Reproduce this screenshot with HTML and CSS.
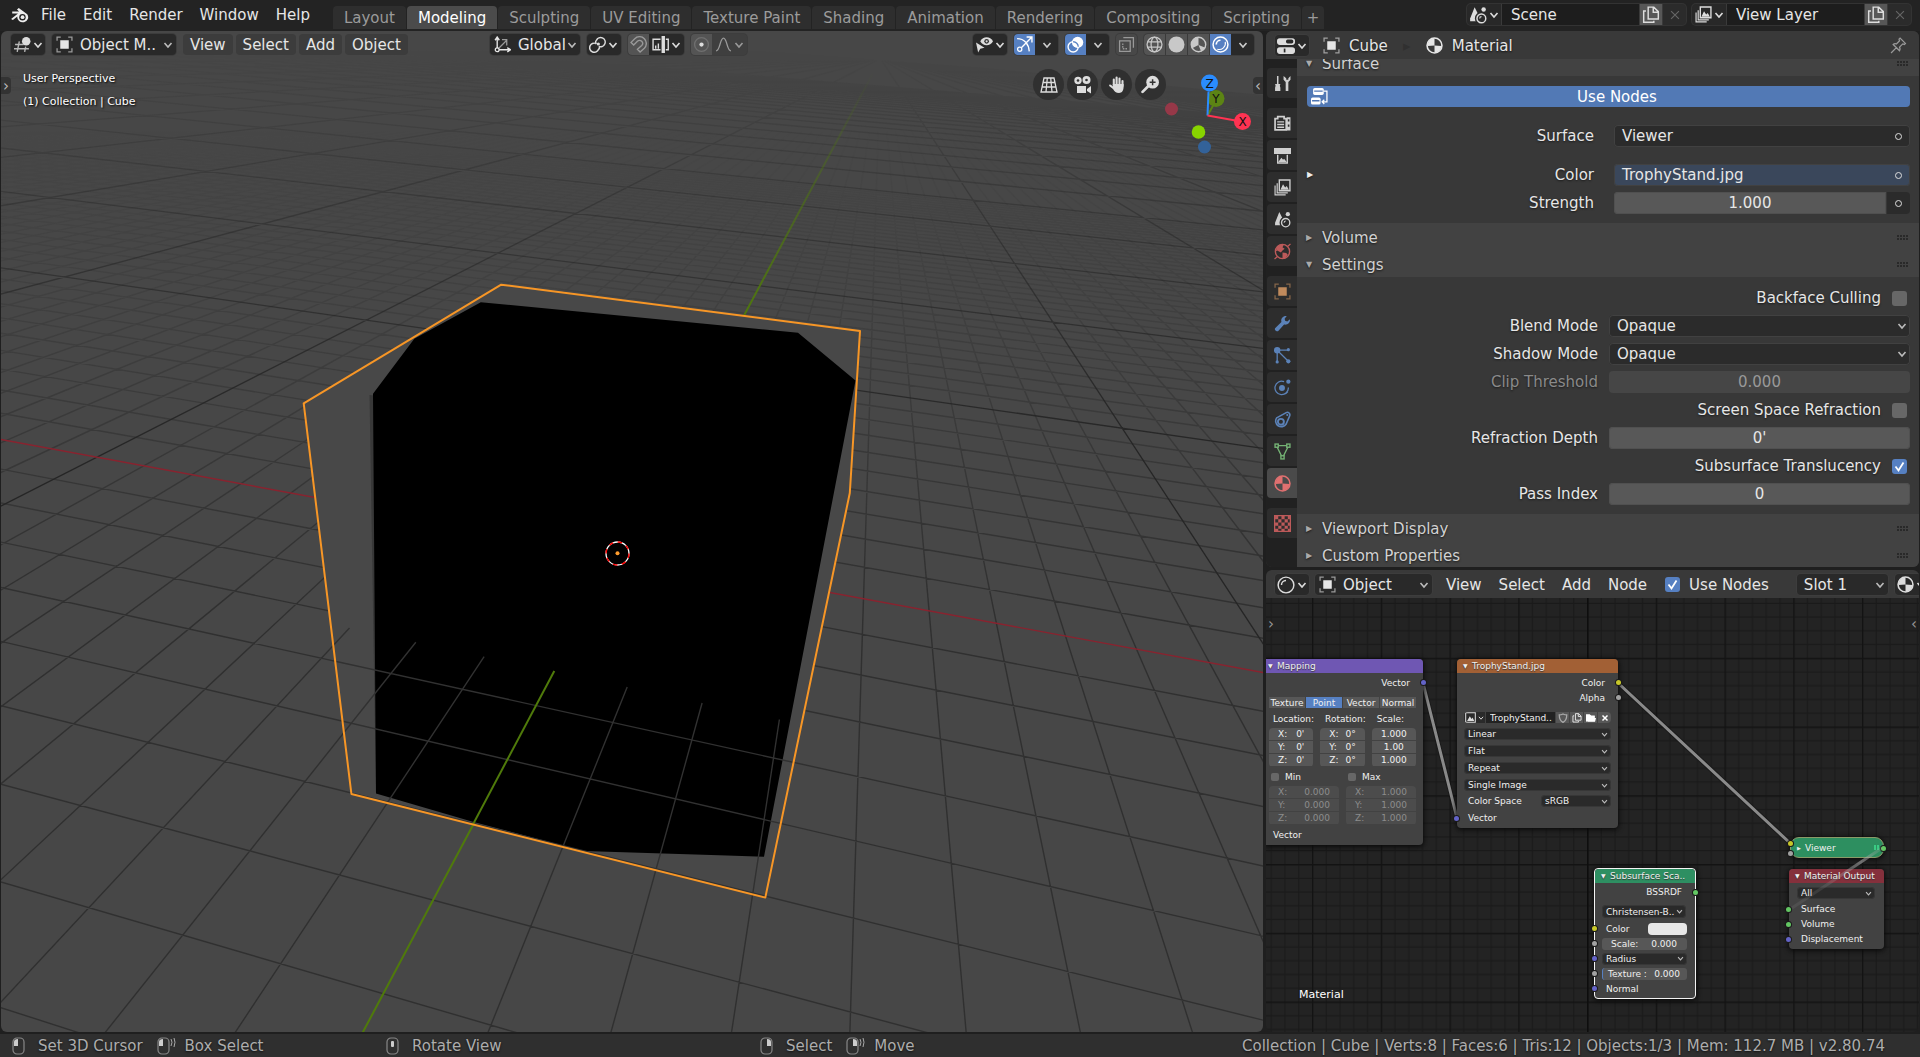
FILE: index.html
```html
<!DOCTYPE html>
<html lang="en">
<head>
<meta charset="utf-8">
<title>Blender</title>
<link rel="stylesheet" href="styles.css">
</head>
<body>
<svg class="defs" aria-hidden="true">
  <symbol id="chev" viewBox="0 0 10 10"><path d="M1.500 3l3.500 4 3.500-4" fill="none" stroke="currentColor" stroke-width="1.600"/></symbol>
  <symbol id="i-blender" viewBox="0 0 18 18"><path d="M1 12.500L7.200 7.600H2V5.800h6.200L6.300 4l1.600-1.300L15.500 8.400a4.900 4.600 0 1 1-8.900 2L2.600 13.600z" fill="#eee"/><circle cx="11.200" cy="11" r="2.900" fill="#232323"/><circle cx="11.300" cy="11" r="1.700" fill="#eee"/></symbol>
  <symbol id="i-object" viewBox="0 0 16 16"><rect x="4" y="4" width="8" height="8" fill="currentColor"/><path d="M1 4.500V1h3.500M11.500 1H15v3.500M15 11.500V15h-3.500M4.500 15H1v-3.500" fill="none" stroke="currentColor" stroke-opacity=".6" stroke-width="1.200"/></symbol>
  <symbol id="i-view3d" viewBox="0 0 16 16"><path d="M1 8h8M0 12h14M5 5L3 15M11 10l-1 5" stroke="currentColor" stroke-width="1.300" fill="none" opacity=".8"/><circle cx="11.500" cy="5" r="4" fill="currentColor"/></symbol>
  <symbol id="i-axes" viewBox="0 0 16 16"><path d="M3 13V2M1 4l2-3 2 3M3 13h12M12.500 11l3 2-3 2" fill="none" stroke="currentColor" stroke-width="1.300"/><path d="M4 12l8-8M7.500 3.500H12V9" fill="none" stroke="currentColor" stroke-width="1.200" opacity=".6"/><circle cx="3" cy="13" r="1.800" fill="#292929" stroke="currentColor" stroke-width="1.200"/></symbol>
  <symbol id="i-pivot" viewBox="0 0 16 16"><g fill="none" stroke="currentColor" stroke-width="1.400"><path d="M6.500 7A4.300 4.300 0 1 0 9 12.500c1-.5 1-2 .5-3"/><path d="M9.500 9.800A4.300 4.300 0 1 0 7 4c-1 .8-1 2.500 0 3.500"/></g><circle cx="8.800" cy="7.500" r="1.500" fill="currentColor"/></symbol>
  <symbol id="i-magnet" viewBox="0 0 16 16"><path d="M1.500 6.500L5 3a6.200 6.200 0 0 1 9 9L10 15.500 7.500 13l4-3.500a2.700 2.700 0 0 0-4-4L4 9z" fill="none" stroke="currentColor" stroke-width="1.300" transform="translate(-.5 -.5)"/></symbol>
  <symbol id="i-snap" viewBox="0 0 16 16"><path d="M8 3H1v10h7M13 3h2.300v10H13M3.500 12V9M6 12V7" fill="none" stroke="currentColor" stroke-width="1.300"/><rect x="9" y="0" width="3.200" height="16" fill="currentColor"/></symbol>
  <symbol id="i-prop" viewBox="0 0 16 16"><circle cx="8" cy="8" r="6.500" fill="none" stroke="currentColor" stroke-opacity=".4" stroke-width="1.300"/><circle cx="8" cy="8" r="2" fill="#ddd"/></symbol>
  <symbol id="i-curve" viewBox="0 0 16 16"><path d="M1 14c4 0 3.500-12 7-12s3 12 7 12" fill="none" stroke="currentColor" stroke-width="1.300"/></symbol>
  <symbol id="i-eye" viewBox="0 0 16 16"><path d="M4 5c2.500-5 9.500-5 12 0-2.500 5-9.500 5-12 0z" fill="currentColor"/><circle cx="10" cy="5" r="2.200" fill="#333"/><circle cx="10" cy="5" r="1" fill="currentColor"/><path d="M0 6l8 5-4 1-2 3.500z" fill="currentColor"/></symbol>
  <symbol id="i-gizmo" viewBox="0 0 16 16"><path d="M1 2.500c7 0 11 5 11.500 12M5 11l9.500-9.500M10 1h5v5" fill="none" stroke="currentColor" stroke-width="1.300"/><circle cx="3.500" cy="12.500" r="2" fill="none" stroke="currentColor" stroke-width="1.200"/></symbol>
  <symbol id="i-overlay" viewBox="0 0 16 16"><circle cx="10" cy="6" r="5.300" fill="currentColor"/><circle cx="5.800" cy="10.200" r="4.800" fill="none" stroke="currentColor" stroke-width="1.300"/><path d="M5.800 5.400a4.800 4.800 0 0 1 4.800 4.800" fill="none" stroke="#5680c2" stroke-width="1.200"/></symbol>
  <symbol id="i-xray" viewBox="0 0 16 16"><g fill="none" stroke="currentColor" stroke-width="1.200"><path d="M5 1.500h9.500V11M11.500 4.500h-10v10h10z"/><path d="M4.500 7v5h5" stroke-dasharray="1.500 1"/></g></symbol>
  <symbol id="i-wire" viewBox="0 0 16 16"><g fill="none" stroke="currentColor" stroke-width="1.200"><circle cx="8" cy="8" r="7"/><ellipse cx="8" cy="8" rx="3.200" ry="7"/><path d="M1.500 5.500h13M1.500 10.500h13"/></g></symbol>
  <symbol id="i-solid" viewBox="0 0 16 16"><circle cx="8" cy="8" r="7.500" fill="currentColor"/></symbol>
  <symbol id="i-matprev" viewBox="0 0 16 16"><circle cx="8" cy="8" r="6.800" fill="none" stroke="currentColor" stroke-width="1.300"/><path d="M8 8.500L8 1a7 7 0 0 0-6 10.500zM8 8.500l6.500 2.500a7 7 0 0 1-4 3.500z" fill="currentColor"/></symbol>
  <symbol id="i-render" viewBox="0 0 16 16"><circle cx="8" cy="8" r="7" fill="none" stroke="currentColor" stroke-width="1.400"/><path d="M4 8a4 4 0 0 1 4-4" fill="none" stroke="currentColor" stroke-width="1.600"/><path d="M5 12.500a6 6 0 0 0 7.500-7" fill="none" stroke="currentColor" stroke-width="1"/></symbol>
  <symbol id="i-shaded" viewBox="0 0 16 16"><circle cx="8" cy="8" r="7" fill="none" stroke="currentColor" stroke-width="1.300"/><path d="M4 8a4 4 0 0 1 4-4" fill="none" stroke="currentColor" stroke-width="1.300"/></symbol>
  <symbol id="i-material" viewBox="0 0 16 16"><circle cx="8" cy="8" r="7" fill="none" stroke="currentColor" stroke-width="1.500"/><path d="M8 8V1a7 7 0 0 0-6.500 7.500zM8 8l6.500.5a7 7 0 0 1-6.500 6.500z" fill="currentColor"/></symbol>
  <symbol id="i-props" viewBox="0 0 16 16"><g fill="currentColor"><rect x="0" y="1" width="16" height="6" rx="2.500"/><rect x="0" y="9" width="16" height="6" rx="2.500"/></g><rect x="8" y="2.300" width="6.500" height="3.400" rx="1.500" fill="#282828"/><rect x="6" y="10.300" width="1.500" height="3.400" fill="#282828"/></symbol>
  <symbol id="i-scene" viewBox="0 0 16 16"><path d="M5 1l4 8-2 4.500H1V11z" fill="currentColor"/><circle cx="13" cy="3" r="2" fill="currentColor"/><circle cx="11" cy="11" r="4.300" fill="none" stroke="#2a2a2a" stroke-width="3"/><circle cx="11" cy="11" r="3.900" fill="#2a2a2a" stroke="currentColor" stroke-width="1.300"/><path d="M9.500 11a1.600 1.600 0 0 1 1.600-1.600" fill="none" stroke="currentColor"/></symbol>
  <symbol id="i-layers" viewBox="0 0 16 16"><path d="M5 1h10v10H5z" fill="none" stroke="currentColor" stroke-width="1.300"/><path d="M3 4v9h10M1 6v9h10" fill="none" stroke="currentColor" stroke-width="1.100"/><path d="M6 10l2.500-5 2 3 1.500-1.500 2 3.500z" fill="currentColor"/></symbol>
  <symbol id="i-copy" viewBox="0 0 16 16"><path d="M5.500 1h5L14.500 5v6.500h-9zM10 1v4.500h4.500M3.500 4.500h-2v10h9v-1.500" fill="none" stroke="currentColor" stroke-width="1.300"/></symbol>
  <symbol id="i-x" viewBox="0 0 16 16"><path d="M3.500 3.500l9 9M12.500 3.500l-9 9" fill="none" stroke="currentColor" stroke-width="1.300"/></symbol>
  <symbol id="i-xb" viewBox="0 0 16 16"><path d="M3 3l10 10M13 3L3 13" fill="none" stroke="currentColor" stroke-width="3"/></symbol>
  <symbol id="i-pin" viewBox="0 0 16 16"><path d="M1 15l5-5M3 7l6 6c1-1 .5-2.500 0-3.500l3-3 1.500.5 1-1-5-5-1 1 .5 1.500-3 3C5 6 4 6 3 7z" fill="none" stroke="currentColor" stroke-width="1.200"/></symbol>
  <symbol id="i-nodes" viewBox="0 0 16 16"><rect x="2" y="0" width="10" height="6.500" rx="1.500" fill="currentColor"/><rect x="0" y="9" width="9" height="6.500" rx="1.500" fill="currentColor"/><path d="M3 3h8M1 12h7" stroke="#4f76b4" stroke-width="1.200"/><path d="M12 3h3v10h-4M12.500 11l-2 2 2 2" fill="none" stroke="currentColor" stroke-width="1.200"/></symbol>
  <symbol id="i-tool" viewBox="0 0 16 16"><path d="M3.500 1v8" stroke="currentColor" stroke-width="1.400"/><path d="M1 8.500h5l-.5 1.500.5 2v3H1v-3l.5-2z" fill="currentColor"/><path d="M9 1v3.500l2 2V15h2.500V6.500l2-2V1L13.500 3v1.500h-2V3z" fill="currentColor"/></symbol>
  <symbol id="i-camback" viewBox="0 0 16 16"><path d="M1 3.500h2.500V1.500h6v2h2V14H1z" fill="none" stroke="currentColor" stroke-width="1.600"/><path d="M3 6.500h6.500M3 9h6.500M3 11.500h6.500" stroke="currentColor" stroke-width="1.300"/><path d="M12 2h3.500v12.500H12z" fill="currentColor"/><path d="M13 4h1.500v2H13zM13 9h1.500v2H13z" fill="#2d2d2d"/></symbol>
  <symbol id="i-printer" viewBox="0 0 16 16"><path d="M0 1h16v5.500H0z" fill="currentColor"/><path d="M3.500 5.500h9V15h-9z" fill="none" stroke="currentColor" stroke-width="1.300"/><path d="M3 7h10" stroke="#333"/><path d="M4 14l3-4 1.500 2 1-1 2.500 3z" fill="currentColor"/></symbol>
  <symbol id="i-world" viewBox="0 0 16 16"><circle cx="8" cy="8" r="6.700" fill="none" stroke="currentColor" stroke-width="1.300"/><path d="M3 3.500C5 1.500 8 1 9 2l-1 2 2 1.500-2 1.500-1.500 2L3 7 1.500 8zM8 9l3.500.5L13 11l-3 4-2-1z" fill="currentColor"/><path d="M13 3l2.500-2M3 13L.5 15" stroke="currentColor" stroke-width="1.200"/></symbol>
  <symbol id="i-wrench" viewBox="0 0 16 16"><path d="M1 12.500l6-6C6 3 9 .5 12 1l-2 2.500.5 2 2 .5L15 4c.5 3-2 5.500-5.500 5L4 15c-1 1-4-.5-3-2.500z" fill="currentColor"/></symbol>
  <symbol id="i-particles" viewBox="0 0 16 16"><g fill="currentColor"><circle cx="3" cy="3" r="3"/><circle cx="13.500" cy="2.500" r="1.500"/><circle cx="3" cy="14" r="1.500"/><circle cx="13.500" cy="13.500" r="2"/></g><path d="M3 3h10M3 3v11M3 3l10 10" stroke="currentColor" stroke-width="1.200"/></symbol>
  <symbol id="i-physics" viewBox="0 0 16 16"><circle cx="7.500" cy="8.500" r="2.800" fill="currentColor"/><circle cx="13.500" cy="2.500" r="2" fill="currentColor"/><path d="M9.500 2.500A6.300 6.300 0 1 0 13.500 8M13 12a6 6 0 0 1-4 2.500" fill="none" stroke="currentColor" stroke-width="1.200"/></symbol>
  <symbol id="i-constraint" viewBox="0 0 16 16"><path d="M2.500 6.500l9-5c2-1 4 1 3.300 3l-3.500 8A5.300 5.300 0 1 1 2.500 6.500z" fill="none" stroke="currentColor" stroke-width="1.500"/><circle cx="6.500" cy="10.200" r="2.800" fill="none" stroke="currentColor" stroke-width="1.800"/><circle cx="12.500" cy="3.800" r="1" fill="currentColor"/></symbol>
  <symbol id="i-mesh" viewBox="0 0 16 16"><g fill="none" stroke="currentColor" stroke-width="1.300"><rect x="1" y="1" width="3" height="3"/><rect x="12" y="1" width="3" height="3"/><rect x="6.500" y="12" width="3" height="3"/><path d="M4 2.500h8M3 4l4 8M13 4l-4 8"/></g></symbol>
  <symbol id="i-texture" viewBox="0 0 16 16"><rect x=".6" y=".6" width="14.800" height="14.800" fill="none" stroke="currentColor" stroke-width="1.200"/><path d="M1 1h3v3H1zM7 1h3v3H7zM13 1h2v3h-2zM4 4h3v3H4zM10 4h3v3h-3zM1 7h3v3H1zM7 7h3v3H7zM13 7h2v3h-2zM4 10h3v3H4zM10 10h3v3h-3zM1 13h3v2H1zM7 13h3v2H7zM13 13h2v2h-2z" fill="currentColor"/></symbol>
  <symbol id="i-image" viewBox="0 0 16 16"><path d="M1 1h14v14H1z" fill="none" stroke="currentColor" stroke-width="1.500"/><path d="M3 13l4-7 2.500 4L11 8l2.500 5z" fill="currentColor"/></symbol>
  <symbol id="i-shield" viewBox="0 0 16 16"><path d="M8 1.500c2 1 4 1.500 6 1.500 0 6-1 9-6 12-5-3-6-6-6-12 2 0 4-.5 6-1.500z" fill="none" stroke="currentColor" stroke-width="2"/></symbol>
  <symbol id="i-folder" viewBox="0 0 16 16"><path d="M0 2h6l2 2h6v3H3l-2 7H0zM4 8h12l-1.500 6H2z" fill="currentColor"/><path d="M1 3h6l1 2h6v8H1z" fill="currentColor"/></symbol>
  <symbol id="i-grip" viewBox="0 0 12 5"><path d="M0 1h2M3 1h2M6 1h2M9 1h2M0 4h2M3 4h2M6 4h2M9 4h2" stroke="currentColor" stroke-width="1"/></symbol>
  <symbol id="i-mouse" viewBox="0 0 14 18"><rect x="1" y="1" width="11" height="16" rx="4" fill="none" stroke="currentColor" stroke-opacity=".7" stroke-width="1.200"/></symbol>
</svg>

<header class="topbar">
  <nav class="menus" aria-label="Main menu">
    <button class="logo" aria-label="Blender"><svg width="20" height="20"><use href="#i-blender"/></svg></button>
    <button>File</button><button>Edit</button><button>Render</button><button>Window</button><button>Help</button>
  </nav>
  <nav class="workspaces" aria-label="Workspaces">
    <button>Layout</button><button class="on">Modeling</button><button>Sculpting</button><button>UV Editing</button><button>Texture Paint</button><button>Shading</button><button>Animation</button><button>Rendering</button><button>Compositing</button><button>Scripting</button><button class="plus" aria-label="Add workspace">+</button>
  </nav>
  <div class="datablocks">
    <div class="datablock">
      <button class="pick" aria-label="Browse scene"><svg width="18" height="18"><use href="#i-scene"/></svg><svg width="10" height="10"><use href="#chev"/></svg></button>
      <input value="Scene" aria-label="Scene name">
      <button class="copy" aria-label="New scene"><svg width="18" height="18"><use href="#i-copy"/></svg></button>
      <button class="close" aria-label="Remove scene"><svg width="14" height="14"><use href="#i-x"/></svg></button>
    </div>
    <div class="datablock">
      <button class="pick" aria-label="Browse view layer"><svg width="17" height="17"><use href="#i-layers"/></svg><svg width="10" height="10"><use href="#chev"/></svg></button>
      <input value="View Layer" aria-label="View layer name">
      <button class="copy" aria-label="New view layer"><svg width="18" height="18"><use href="#i-copy"/></svg></button>
      <button class="close" aria-label="Remove view layer"><svg width="14" height="14"><use href="#i-x"/></svg></button>
    </div>
  </div>
</header>

<main class="areas">
  <section class="area viewport" aria-label="3D Viewport">
    <svg class="scene" viewBox="1 31 1262 1001" preserveAspectRatio="xMidYMid slice">
      <defs>
        <linearGradient id="fade-minor" gradientUnits="userSpaceOnUse" x1="0" y1="130" x2="0" y2="620"><stop offset="0" stop-color="#000"/><stop offset=".35" stop-color="#4a4a4a"/><stop offset=".7" stop-color="#b0b0b0"/><stop offset="1" stop-color="#fff"/></linearGradient>
        <linearGradient id="fade-major" gradientUnits="userSpaceOnUse" x1="0" y1="50" x2="0" y2="450"><stop offset="0" stop-color="#000"/><stop offset=".4" stop-color="#707070"/><stop offset="1" stop-color="#fff"/></linearGradient>
        <linearGradient id="fade-axis" gradientUnits="userSpaceOnUse" x1="0" y1="70" x2="0" y2="330"><stop offset="0" stop-color="#4f7a0a" stop-opacity="0"/><stop offset="1" stop-color="#4f7a0a"/></linearGradient>
        <mask id="m-minor" maskUnits="userSpaceOnUse" x="0" y="0" width="1270" height="1040"><path d="M0 0h1270v1040H0z" fill="url(#fade-minor)"/></mask>
        <mask id="m-major" maskUnits="userSpaceOnUse" x="0" y="0" width="1270" height="1040"><path d="M0 0h1270v1040H0z" fill="url(#fade-major)"/></mask>
        <clipPath id="front"><path id="front-path" d=""/></clipPath>
      </defs>
      <g mask="url(#m-minor)"><path id="grid-minor" class="minor"/></g>
      <g mask="url(#m-major)"><path id="grid-major" class="major"/></g>
      <path d="M0 439.300L1266 673" class="axis-x"/>
      <path d="M364 1030L362 1034M364 1030L873 73" stroke="url(#fade-axis)" class="axis-y"/>
      <path d="M501.200 284.700L303.700 403.300 351.400 794 765.300 897.600 849.800 493 860 331z" class="body"/>
      <path d="M369.500 395L378 396 380 794 376 793z" class="edge"/>
      <path d="M480.800 302.200L798 332.800 855.500 380.400 764 856.800 727 855.500 583.700 851 473.500 822 376 793.500 373 393.800 414.300 338.700z" class="face"/>
      <g clip-path="url(#front)"><path id="grid-front" class="front"/><path d="M364 1030L554.300 671" class="axis-front"/></g>
      <path d="M501.200 284.700L303.700 403.300 351.400 794 765.300 897.600 849.800 493 860 331z" class="outline"/>
      <circle cx="617.500" cy="553.500" r="11.500" class="cursor-white"/><circle cx="617.500" cy="553.500" r="11.500" class="cursor-red"/>
      <circle cx="617.500" cy="553.300" r="2" fill="#ff9d2e"/>
    </svg>
    <div class="view-head">
      <div class="bar">
        <button class="box pick" aria-label="Editor type"><svg width="17" height="17"><use href="#i-view3d"/></svg><svg width="10" height="10"><use href="#chev"/></svg></button>
        <div class="box dd mode"><svg width="17" height="17"><use href="#i-object"/></svg><select aria-label="Mode"><option>Object M..</option></select></div>
        <div class="menu-set"><button>View</button><button>Select</button><button>Add</button><button>Object</button></div>
      </div>
      <i class="sp4"></i>
      <div class="bar">
        <div class="box dd orient"><svg width="17" height="17"><use href="#i-axes"/></svg><select aria-label="Orientation"><option>Global</option></select></div>
        <button class="box pick" aria-label="Pivot point"><svg width="17" height="17"><use href="#i-pivot"/></svg><svg width="10" height="10"><use href="#chev"/></svg></button>
        <div class="join"><button class="sq dim" aria-label="Snap"><svg width="17" height="17"><use href="#i-magnet"/></svg></button><button class="pick wide-pick" aria-label="Snap to"><svg width="17" height="17"><use href="#i-snap"/></svg><svg width="10" height="10"><use href="#chev"/></svg></button></div>
        <div class="join faint"><button class="sq" aria-label="Proportional editing"><svg width="17" height="17"><use href="#i-prop"/></svg></button><button class="pick wide-pick" aria-label="Falloff"><svg width="17" height="17"><use href="#i-curve"/></svg><svg width="10" height="10"><use href="#chev"/></svg></button></div>
      </div>
      <i class="sp11"></i>
      <div class="bar">
        <button class="box pick" aria-label="Object types visibility"><svg width="17" height="17"><use href="#i-eye"/></svg><svg width="10" height="10"><use href="#chev"/></svg></button>
        <div class="join"><button class="sq on" aria-label="Gizmos"><svg width="17" height="17"><use href="#i-gizmo"/></svg></button><button class="dn" aria-label="Gizmo options"><svg width="10" height="10"><use href="#chev"/></svg></button></div>
        <div class="join"><button class="sq on" aria-label="Overlays"><svg width="17" height="17"><use href="#i-overlay"/></svg></button><button class="dn" aria-label="Overlay options"><svg width="10" height="10"><use href="#chev"/></svg></button></div>
        <div class="join faint"><button class="sq xray" aria-label="X-ray"><svg width="17" height="17"><use href="#i-xray"/></svg></button></div>
        <div class="join"><button class="sq lit" aria-label="Wireframe"><svg width="17" height="17"><use href="#i-wire"/></svg></button><button class="sq lit" aria-label="Solid"><svg width="17" height="17"><use href="#i-solid"/></svg></button><button class="sq lit" aria-label="Look dev"><svg width="17" height="17"><use href="#i-matprev"/></svg></button><button class="sq on" aria-label="Rendered"><svg width="17" height="17"><use href="#i-render"/></svg></button><button class="dn" aria-label="Shading options"><svg width="10" height="10"><use href="#chev"/></svg></button></div>
      </div>
    </div>
    <div class="overlay">
      <div class="info"><p>User Perspective</p><p>(1) Collection | Cube</p></div>
      <div class="nav">
        <button aria-label="Toggle perspective"><svg width="18" height="18" viewBox="0 0 18 18"><path d="M4 2h10l3 14H1zM3 6.500h12M2 11h14M7.300 2L6 16M10.700 2L12 16" fill="none" stroke="#ddd" stroke-width="1.300"/></svg></button>
        <button aria-label="Camera view"><svg width="18" height="18" viewBox="0 0 18 18"><circle cx="4" cy="4.500" r="3.700" fill="#ddd"/><circle cx="12.500" cy="4" r="4" fill="#ddd"/><circle cx="4" cy="4.500" r="1.300" fill="#333"/><circle cx="12.500" cy="4" r="1.300" fill="#333"/><path d="M3 10h9v7H3zM13 13l4-3v7.500l-4-2.500z" fill="#ddd"/></svg></button>
        <button aria-label="Pan"><svg width="18" height="18" viewBox="0 0 18 18"><path d="M5.800 9V3.500M8.600 8.500V1.500M11.500 8.500V2.500M14.500 10V5" stroke="#ddd" stroke-width="2.100" stroke-linecap="round"/><path d="M4.800 8h10.800v3c0 3-1.500 6-4.600 6-3 0-4.500-1.500-6-4L1.200 10c-.5-1.500 1-2 2-1l1.600 1.500z" fill="#ddd"/></svg></button>
        <button aria-label="Zoom"><svg width="19" height="19" viewBox="0 0 18 18"><path d="M1.500 16L7 10.500" stroke="#ddd" stroke-width="2.600" stroke-linecap="round"/><circle cx="11" cy="6.800" r="6" fill="#ddd"/><path d="M11 4v5.600M8.200 6.800h5.600" stroke="#333" stroke-width="1.400"/></svg></button>
      </div>
      <svg class="gizmo" width="90" height="90" viewBox="0 0 90 90" role="img" aria-label="View gizmo">
        <circle cx="10.500" cy="39" r="6.500" fill="#963848"/><circle cx="43.500" cy="77" r="6.500" fill="#336299"/>
        <circle cx="55" cy="28.500" r="8.500" fill="#5c8414"/><path d="M46.500 45.500L53 34" stroke="#5c8414" stroke-width="2"/>
        <path d="M46.500 45.500l1-24" stroke="#2a8cff" stroke-width="2"/><path d="M46.500 45.500l28 5" stroke="#ff3352" stroke-width="2"/>
        <circle cx="48.500" cy="13" r="8.500" fill="#2a8cff"/><circle cx="81.500" cy="51.500" r="8.500" fill="#ff3352"/><circle cx="37.500" cy="62" r="6.800" fill="#88d400"/>
        <text x="48.500" y="17.500">Z</text><text x="55" y="33">Y</text><text x="81.500" y="56">X</text>
      </svg>
      <button class="flap left" aria-label="Show toolbar">›</button><button class="flap right" aria-label="Show sidebar">‹</button>
    </div>
  </section>

  <div class="side">
    <section class="area props" aria-label="Properties">
      <div class="props-head">
        <button class="box pick" aria-label="Editor type"><svg width="18" height="18"><use href="#i-props"/></svg><svg width="10" height="10"><use href="#chev"/></svg></button>
        <span class="crumb"><svg width="17" height="17"><use href="#i-object"/></svg>Cube</span>
        <span class="arrow">▸</span>
        <span class="crumb"><svg width="17" height="17"><use href="#i-material"/></svg>Material</span>
        <button class="pin" aria-label="Pin"><svg width="17" height="17"><use href="#i-pin"/></svg></button>
      </div>
      <div class="props-main">
        <nav class="tabs" aria-label="Property tabs">
          <button aria-label="Tool"><svg><use href="#i-tool"/></svg></button>
          <button class="first" aria-label="Render"><svg><use href="#i-camback"/></svg></button>
          <button aria-label="Output"><svg><use href="#i-printer"/></svg></button>
          <button aria-label="View layer"><svg><use href="#i-layers"/></svg></button>
          <button aria-label="Scene"><svg><use href="#i-scene"/></svg></button>
          <button class="red" aria-label="World"><svg><use href="#i-world"/></svg></button>
          <button class="first orange" aria-label="Object"><svg><use href="#i-object"/></svg></button>
          <button class="blue" aria-label="Modifiers"><svg><use href="#i-wrench"/></svg></button>
          <button class="blue" aria-label="Particles"><svg><use href="#i-particles"/></svg></button>
          <button class="blue" aria-label="Physics"><svg><use href="#i-physics"/></svg></button>
          <button class="blue" aria-label="Constraints"><svg><use href="#i-constraint"/></svg></button>
          <button class="green" aria-label="Object data"><svg><use href="#i-mesh"/></svg></button>
          <button class="red on" aria-label="Material"><svg><use href="#i-material"/></svg></button>
          <button class="first red" aria-label="Texture"><svg><use href="#i-texture"/></svg></button>
        </nav>
        <div class="panels">
          <div class="scroll">
            <button class="panel-h"><i>▼</i><span>Surface</span><svg width="12" height="5"><use href="#i-grip"/></svg></button>
            <div class="surface">
              <button class="use-nodes"><svg width="17" height="17"><use href="#i-nodes"/></svg><span>Use Nodes</span></button>
              <div class="prow s1"><span class="lab">Surface</span><button class="fld menu">Viewer<i class="dot"></i></button></div>
              <div class="prow s2"><i class="expand">▶</i><span class="lab">Color</span><button class="fld linked">TrophyStand.jpg<i class="dot"></i></button></div>
              <div class="prow"><label class="lab" for="strength">Strength</label><div class="pair"><input id="strength" class="fld num" value="1.000"><button class="deco" aria-label="Strength input"><i class="dot"></i></button></div></div>
            </div>
            <button class="panel-h"><i>▶</i><span>Volume</span><svg width="12" height="5"><use href="#i-grip"/></svg></button>
            <button class="panel-h"><i>▼</i><span>Settings</span><svg width="12" height="5"><use href="#i-grip"/></svg></button>
            <div class="settings">
              <label class="crow">Backface Culling<input type="checkbox"></label>
              <div class="srow"><label for="blend">Blend Mode</label><select id="blend" class="fld"><option>Opaque</option></select></div>
              <div class="srow"><label for="shadow">Shadow Mode</label><select id="shadow" class="fld"><option>Opaque</option></select></div>
              <div class="srow off"><label for="clip">Clip Threshold</label><input id="clip" class="fld num" value="0.000" disabled></div>
              <label class="crow">Screen Space Refraction<input type="checkbox"></label>
              <div class="srow"><label for="refr">Refraction Depth</label><input id="refr" class="fld num" value="0'"></div>
              <label class="crow">Subsurface Translucency<input type="checkbox" checked></label>
              <div class="srow"><label for="pass">Pass Index</label><input id="pass" class="fld num" value="0"></div>
            </div>
            <button class="panel-h"><i>▶</i><span>Viewport Display</span><svg width="12" height="5"><use href="#i-grip"/></svg></button>
            <button class="panel-h"><i>▶</i><span>Custom Properties</span><svg width="12" height="5"><use href="#i-grip"/></svg></button>
          </div>
        </div>
      </div>
    </section>

    <section class="area nodes" aria-label="Shader Editor">
      <div class="nodes-head">
        <button class="box pick" aria-label="Editor type"><svg width="18" height="18"><use href="#i-shaded"/></svg><svg width="10" height="10"><use href="#chev"/></svg></button>
        <div class="box dd shader"><svg width="17" height="17"><use href="#i-object"/></svg><select aria-label="Shader type"><option>Object</option></select></div>
        <nav class="node-menus"><button>View</button><button>Select</button><button>Add</button><button>Node</button></nav>
        <label class="usen"><input type="checkbox" checked>Use Nodes</label>
        <div class="box dd slot"><select aria-label="Slot"><option>Slot 1</option></select></div>
        <button class="box pick" aria-label="Browse material"><svg width="17" height="17"><use href="#i-material"/></svg><svg width="10" height="10"><use href="#chev"/></svg></button>
      </div>
      <div class="canvas">
        <svg class="back" width="100%" height="100%">
          <defs><pattern id="ngrid" x="321" y="266" width="68.750" height="68.750" patternUnits="userSpaceOnUse">
            <path d="M14.250 0v68.750M28 0v68.750M41.750 0v68.750M55.500 0v68.750M0 14.250h68.750M0 28h68.750M0 41.750h68.750M0 55.500h68.750" stroke="#1a1a1a" stroke-width="1.200"/>
            <path d="M.7 0v68.750M0 .7h68.750" stroke="#131313" stroke-width="1.400"/></pattern></defs>
          <rect width="100%" height="100%" fill="url(#ngrid)"/>
          <path d="M321.700 0v500" stroke="#0e0e0e" stroke-width="1.400"/>
          <g fill="none" stroke="#151515" stroke-width="5" opacity=".6"><path d="M157 85L191 220M352 85L524 245"/></g>
          <g fill="none" stroke="#8a8a8a" stroke-width="3"><path d="M157 85L191 220M352 85L524 245"/></g>
        </svg>

        <article class="node mapping">
          <h3><i>▼</i>Mapping</h3>
          <p class="out">Vector<b class="sock vec"></b></p>
          <div class="seg"><button>Texture</button><button class="on">Point</button><button>Vector</button><button>Normal</button></div>
          <div class="cols3 heads"><span>Location:</span><span>Rotation:</span><span>Scale:</span></div>
          <div class="cols3">
            <div class="stack"><label>X:<input value="0'"></label><label>Y:<input value="0'"></label><label>Z:<input value="0'"></label></div>
            <div class="stack"><label>X:<input value="0°"></label><label>Y:<input value="0°"></label><label>Z:<input value="0°"></label></div>
            <div class="stack wide"><input value="1.000" aria-label="Scale X"><input value="1.00" aria-label="Scale Y"><input value="1.000" aria-label="Scale Z"></div>
          </div>
          <div class="cols2 checks"><label><input type="checkbox">Min</label><label><input type="checkbox">Max</label></div>
          <div class="cols2 muted">
            <div class="stack"><label>X:<input value="0.000" disabled></label><label>Y:<input value="0.000" disabled></label><label>Z:<input value="0.000" disabled></label></div>
            <div class="stack"><label>X:<input value="1.000" disabled></label><label>Y:<input value="1.000" disabled></label><label>Z:<input value="1.000" disabled></label></div>
          </div>
          <p class="in last">Vector</p>
        </article>

        <article class="node trophy">
          <h3><i>▼</i>TrophyStand.jpg</h3>
          <p class="out">Color<b class="sock col"></b></p>
          <p class="out">Alpha<b class="sock val"></b></p>
          <div class="image">
            <button class="im-pick" aria-label="Browse image"><svg width="11" height="11"><use href="#i-image"/></svg><svg width="6" height="6"><use href="#chev"/></svg></button>
            <input value="TrophyStand.." aria-label="Image name">
            <button aria-label="Fake user"><svg width="10" height="10"><use href="#i-shield"/></svg></button><button class="lite" aria-label="New image"><svg width="10" height="10"><use href="#i-copy"/></svg></button><button class="lite" aria-label="Open image"><svg width="10" height="10"><use href="#i-folder"/></svg></button><button class="lite" aria-label="Unlink"><svg width="8" height="8"><use href="#i-xb"/></svg></button>
          </div>
          <select class="nsel" aria-label="Interpolation"><option>Linear</option></select>
          <select class="nsel" aria-label="Projection"><option>Flat</option></select>
          <select class="nsel" aria-label="Extension"><option>Repeat</option></select>
          <select class="nsel" aria-label="Source"><option>Single Image</option></select>
          <div class="cspace"><label for="cs">Color Space</label><select id="cs" class="nsel"><option>sRGB</option></select></div>
          <p class="in">Vector<b class="sock vec"></b></p>
        </article>

        <article class="node sss">
          <h3><i>▼</i>Subsurface Sca..</h3>
          <p class="out">BSSRDF<b class="sock shd"></b></p>
          <select class="nsel" aria-label="Falloff"><option>Christensen-B..</option></select>
          <div class="nrow"><span>Color</span><button class="swatch" aria-label="Color"></button><b class="sock col"></b></div>
          <div class="nrow nf"><label>Scale:<input value="0.000"></label><b class="sock val"></b></div>
          <div class="nrow"><select class="nsel" aria-label="Radius"><option>Radius</option></select><b class="sock vec"></b></div>
          <div class="nrow nf tex"><label>Texture :<input value="0.000"></label><b class="sock val"></b></div>
          <div class="nrow"><span>Normal</span><b class="sock vec"></b></div>
        </article>

        <article class="node viewer"><i>▶</i><span>Viewer</span><em><svg width="5" height="5"><path d="M1 0v5M4 0v5" stroke="#3fe08f" stroke-width="1.500"/></svg></em><b class="sock col"></b><b class="sock val"></b><b class="sock shd"></b></article>

        <article class="node output">
          <h3><i>▼</i>Material Output</h3>
          <select class="nsel" aria-label="Target"><option>All</option></select>
          <p class="in">Surface<b class="sock shd"></b></p>
          <p class="in">Volume<b class="sock shd"></b></p>
          <p class="in">Displacement<b class="sock vec"></b></p>
        </article>
        <svg class="link-over" width="100%" height="100%"><defs><linearGradient id="lf" gradientUnits="userSpaceOnUse" x1="614" y1="253" x2="526" y2="310"><stop offset="0" stop-color="#aaa" stop-opacity=".2"/><stop offset=".2" stop-color="#aaa" stop-opacity=".6"/><stop offset=".4" stop-color="#aaa" stop-opacity=".35"/><stop offset=".6" stop-color="#aaa" stop-opacity=".15"/><stop offset="1" stop-color="#aaa" stop-opacity=".12"/></linearGradient></defs><path d="M616 250L526 310" stroke="url(#lf)" stroke-width="3"/></svg>
        <span class="mat-name">Material</span>
        <button class="flap left" aria-label="Show toolbar">›</button><button class="flap right" aria-label="Show sidebar">‹</button>
      </div>
    </section>
  </div>
</main>

<footer class="status">
  <div class="keys">
    <span><svg width="14" height="18"><use href="#i-mouse"/><path d="M2 9V5q0-3 4-3v7z" fill="#ccc"/></svg>Set 3D Cursor</span>
    <span><svg width="19" height="18"><use href="#i-mouse" width="14"/><path d="M2 9V5q0-3 4-3v7z" fill="#ccc"/><path d="M14 2q2 3 0 7M17 1q2 4 0 9" fill="none" stroke="#aaa"/></svg>Box Select</span>
  </div>
  <div class="keys"><span><svg width="14" height="18"><use href="#i-mouse"/><rect x="5" y="4" width="3" height="6" rx="1" fill="#ccc"/></svg>Rotate View</span></div>
  <div class="keys">
    <span><svg width="14" height="18"><use href="#i-mouse"/><path d="M11 9V5q0-3-4-3v7z" fill="#ccc"/></svg>Select</span>
    <span><svg width="19" height="18"><use href="#i-mouse" width="14"/><path d="M11 9V5q0-3-4-3v7z" fill="#ccc"/><path d="M14 2q2 3 0 7M17 1q2 4 0 9" fill="none" stroke="#aaa"/></svg>Move</span>
  </div>
  <p class="stats">Collection | Cube | Verts:8 | Faces:6 | Tris:12 | Objects:1/3 | Mem: 112.7 MB | v2.80.74</p>
</footer>
<script src="grid.js"></script>
</body>
</html>
```
FILE: styles.css
```css
* { box-sizing: border-box; }
body {
  margin: 0; height: 100vh; display: grid; grid-template-rows: 31px minmax(0, 1fr) 25px;
  background: #1f1f1f; color: #e6e6e6; overflow: hidden;
  font: 15px/20px "DejaVu Sans", sans-serif;
}
button, input, select { font: inherit; color: inherit; border: 0; margin: 0; padding: 0; background: none; min-width: 0; border-radius: 0; }
select, input { appearance: none; outline: 0; }
button { display: flex; align-items: center; justify-content: center; white-space: nowrap; }
p, h3 { margin: 0; font-weight: normal; }
i, em { font-style: normal; }
svg { flex: none; display: block; }
.defs { position: absolute; width: 0; height: 0; }
select { background: url("data:image/svg+xml,%3Csvg xmlns='http://www.w3.org/2000/svg' width='10' height='10'%3E%3Cpath d='M1.500 3l3.500 4 3.500-4' fill='none' stroke='%23bbb' stroke-width='1.600'/%3E%3C/svg%3E") no-repeat right 3px center; }
input[type="checkbox"] { width: 15px; height: 15px; border-radius: 3px; background: #676767; flex: none; }
input[type="checkbox"]:checked { background: #5680c2 url("data:image/svg+xml,%3Csvg xmlns='http://www.w3.org/2000/svg' width='15' height='15'%3E%3Cpath d='M3.500 7.500l3 4 5-8' fill='none' stroke='white' stroke-width='1.800'/%3E%3C/svg%3E") center; }

/* top bar */
.topbar { display: flex; align-items: flex-start; background: #232323; }
.menus { display: flex; gap: 1px; height: 30px; align-items: center; padding-left: 10px; }
.menus button { padding: 0 8px; }
.menus .logo { padding: 0; margin-right: 2px; }
.workspaces { display: flex; gap: 1px; padding-top: 6px; margin-left: 15px; color: #9b9b9b; }
.workspaces button { height: 23px; padding: 0 11px; background: #2e2e2e; border-radius: 4px 4px 0 0; }
.workspaces .on { background: #4b4b4b; color: #fff; }
.workspaces .plus { width: 22px; padding: 0; }
.datablocks { margin-left: auto; display: flex; gap: 6px; padding: 4px 9px 0 0; }
.datablock { display: flex; width: 219px; height: 21px; gap: 1px; border-radius: 4px; overflow: hidden; background: #3a3a3a; box-shadow: 0 0 0 1px #333; }
.datablock input { flex: 1; background: #1d1d1d; padding-left: 9px; }
.datablock .pick { background: #282828; }
.copy { width: 22px; background: #575757; color: #ddd; }
.close { width: 23px; background: #2b2b2b; color: #666; }
.pick { width: 34px; gap: 2px; color: #dcdcdc; }
.wide-pick { width: 35px; }

/* areas */
.areas { display: grid; grid-template-columns: 1262fr 653fr; gap: 3px; padding: 0 1px; min-height: 0; }
.area { border-radius: 6px; overflow: hidden; min-width: 0; min-height: 0; }
.side { display: grid; grid-template-rows: 536fr 462fr; gap: 3px; min-width: 0; min-height: 0; }

.box, .join { height: 21px; border-radius: 4px; background: #292929; box-shadow: 0 0 0 1px #3d3d3d; }
.dd { display: flex; align-items: center; padding-left: 4px; }
.dd select { flex: 1; height: 21px; padding-left: 7px; }
.join { display: flex; overflow: hidden; }
.sq { width: 21px; background: #545454; }
.sq.on { background: #5680c2; color: #fff; }
.dn { width: 23px; color: #ccc; }
.dim, .faint, .faint .pick { color: #999; }
.lit { color: #c8c8c8; border-right: 1px solid #3a3a3a; width: 22px; }
.faint { background: #3f3f3f; }
.xray { background: #484848; }
.flap { position: absolute; width: 10px; height: 17px; background: #333; color: #bbb; font-size: 15px; }
.flap.left { left: 0; border-radius: 0 4px 4px 0; }
.flap.right { right: 0; border-radius: 4px 0 0 4px; }

/* 3D viewport */
.viewport { position: relative; background: #474747; }
.scene { position: absolute; inset: 0; width: 100%; height: 100%; }
.minor { fill: none; stroke: #303030; stroke-width: 1.4; }
.major { fill: none; stroke: #262626; stroke-width: 1.3; }
.front { fill: none; stroke: #313131; stroke-width: 1.4; }
.axis-x { stroke: #89232f; stroke-width: 1.4; }
.axis-y { stroke-width: 2; fill: none; }
.axis-front { stroke: #4f7a0a; stroke-width: 2; }
.body { fill: #484848; }
.edge { fill: #383838; }
.face { fill: #000; }
.outline { fill: none; stroke: #f79626; stroke-width: 2; stroke-linejoin: round; }
.cursor-white { fill: none; stroke: #fff; stroke-width: 1.3; }
.cursor-red { fill: none; stroke: #f00; stroke-width: 1.4; stroke-dasharray: 4.5 4.5; }
.view-head { position: relative; display: flex; padding: 3px 9px 0 10px; }
.bar { display: flex; gap: 7px; }
.sp4 { flex: 4; }
.sp11 { flex: 11; }
.mode { width: 124px; }
.orient { width: 90px; }
.menu-set { display: flex; gap: 3px; }
.menu-set button { height: 21px; padding: 0 7px; background: #3c3c3c; border-radius: 4px; }
.overlay { position: absolute; inset: 36px 0 0 0; }
.info { padding: 0 0 0 22px; font-size: 11px; line-height: 23px; text-shadow: 1px 1px 2px #000; color: #fff; }
.nav { position: absolute; top: 2px; right: 97px; display: flex; gap: 3px; }
.nav button { width: 31px; height: 31px; border-radius: 50%; background: #303030; }
.gizmo { position: absolute; top: 3px; right: 12px; }
.gizmo text { font: 12px "DejaVu Sans", sans-serif; text-anchor: middle; fill: #111; }
.overlay .flap { top: 10px; }

/* properties */
.props { background: #383838; display: flex; flex-direction: column; }
.props-head { display: flex; align-items: center; height: 28px; flex: none; background: #393939; padding: 1px 12px 0 9px; text-shadow: 0 1px 2px #111; }
.crumb { display: flex; align-items: center; gap: 9px; margin-left: 14px; }
.arrow { width: 14px; margin: 0 12px; text-align: center; color: #303030; text-shadow: none; }
.arrow + .crumb { margin-left: 0; }
.pin { margin-left: auto; color: #999; }
.props-main { display: flex; flex: 1; min-height: 0; }
.tabs { width: 31px; flex: none; background: #212121; padding: 9px 0 0 1px; display: flex; flex-direction: column; gap: 2px; color: #cfcfcf; }
.tabs button { height: 30px; flex: none; background: #2d2d2d; border-radius: 4px 0 0 4px; }
.tabs svg { width: 17px; height: 17px; }
.tabs .first { margin-top: 8px; }
.tabs .on { background: #4a4a4a; }
.tabs .red { color: #bd5a5a; }
.tabs .on.red { color: #e07070; }
.tabs .orange { color: #c08a5c; }
.tabs .blue { color: #5b82b8; }
.tabs .green { color: #75b375; }
.panels { flex: 1; overflow: hidden; min-width: 0; text-shadow: 0 1px 2px #1a1a1a; }
.scroll { margin-top: -10px; }
.panel-h { width: 100%; height: 27px; background: #424242; justify-content: flex-start; padding: 2px 10px 0 9px; color: #d2d2d2; text-shadow: inherit; }
.panel-h i { width: 16px; font-size: 8px; line-height: 18px; text-align: left; color: #aaa; }
.panel-h svg { margin-left: auto; color: #111; }
.surface { padding: 10px 9px 9px 10px; }
.use-nodes { width: 100%; height: 21px; background: #5279b5; border-radius: 4px; padding: 0 4px; color: #fff; margin-bottom: 18px; }
.use-nodes span { flex: 1; }
.prow { display: grid; grid-template-columns: 287fr 296fr; column-gap: 20px; position: relative; align-items: center; margin-bottom: 6px; }
.prow:last-child { margin-bottom: 0; }
.s1 { margin-bottom: 17px; }
.expand { position: absolute; left: 0; font-size: 8px; color: #eee; }
.lab { text-align: right; }
.fld { height: 22px; border-radius: 4px; padding: 0 8px; background-color: #2b2b2b; box-shadow: inset 0 0 0 1px #414141; width: 100%; }
button.fld { justify-content: space-between; text-shadow: none; }
.linked { background: #3a475b; }
.num { background: #585858; text-align: center; box-shadow: inset 0 0 0 1px #505050; }
.dot { width: 7px; height: 7px; border: 1px solid #ddd; border-radius: 50%; }
.pair { display: flex; gap: 1px; }
.pair .fld { border-radius: 4px 0 0 4px; }
.deco { width: 23px; flex: none; height: 22px; background: #2b2b2b; border-radius: 0 4px 4px 0; }
.settings { padding: 10px 9px 9px 10px; display: grid; gap: 6px; }
.crow { display: flex; justify-content: flex-end; align-items: center; gap: 11px; height: 22px; padding-right: 3px; }
.srow { display: grid; grid-template-columns: 291fr 301fr; column-gap: 11px; align-items: center; text-align: right; }
.srow select { text-align: left; }
.off { color: #8a8a8a; }
.off .num { background: #464646; box-shadow: none; color: #999; }

/* shader editor */
.nodes { background: #232323; display: flex; flex-direction: column; }
.nodes-head { display: flex; align-items: center; flex: none; height: 28px; background: #393939; padding: 1px 0 0 9px; overflow: hidden; white-space: nowrap; }
.nodes-head > * { flex: none; }
.shader { width: 117px; margin-left: 6px; }
.node-menus { display: flex; gap: 1px; padding-left: 6px; text-shadow: 0 1px 2px #111; }
.node-menus button { padding: 0 8px; }
.usen { display: flex; align-items: center; gap: 9px; margin-left: 10px; }
.slot { width: 91px; margin: 0 7px 0 28px; padding: 0; }
.canvas { position: relative; flex: 1; min-height: 0; overflow: hidden; font-size: 9px; line-height: 14px; }
.back, .link-over { position: absolute; inset: 0; }
.link-over { pointer-events: none; }
.node { position: absolute; background: #424242; border-radius: 4px; box-shadow: 0 1px 5px 1px #0b0b0b; color: #f0f0f0; }
.node h3 { height: 14px; padding-left: 2px; border-radius: 4px 4px 0 0; display: flex; align-items: center; font-size: 9px; white-space: nowrap; text-shadow: 0 1px 1px #333; }
.node h3 i { width: 9px; font-size: 6px; }
.node p, .nrow { position: relative; height: 15px; padding: 0 13px; }
.node .out { text-align: right; }
.sock { position: absolute; width: 5px; height: 5px; border-radius: 50%; top: 5px; box-shadow: 0 0 0 1px #1a1a1a; }
.out .sock { right: -3px; }
.in .sock, .nrow .sock { left: -3px; }
.vec { background: #6363c7; }
.col { background: #c7c729; }
.val { background: #a1a1a1; }
.shd { background: #63c763; }
.nsel { display: block; height: 12px; line-height: 12px; border-radius: 4px; padding: 0 4px; background-color: #2a2a2a; background-size: 7px; box-shadow: inset 0 0 0 1px #373737; }

.mapping { left: 0; top: 61px; width: 157px; height: 186px; border-radius: 0 4px 4px 0; padding-right: 7px; }
.mapping h3 { margin-right: -7px; background: #6f57b3; border-radius: 0 4px 0 0; }
.mapping .out { margin-right: -7px; height: 24px; padding-top: 3px; }
.mapping .out .sock { top: 7px; }
.seg { display: grid; grid-template-columns: repeat(4, 1fr); gap: 1px; margin-left: 3px; height: 11px; }
.seg button { background: #575757; overflow: hidden; }
.seg .on { background: #5680c2; }
.cols3 { display: grid; grid-template-columns: repeat(3, 1fr); gap: 7px; margin-left: 3px; }
.heads { padding: 4px 0 2px; }
.heads span { padding-left: 4px; white-space: nowrap; }
.cols2 { display: grid; grid-template-columns: 1fr 1fr; gap: 7px; margin-left: 3px; }
.checks { padding: 3px 0 2px; }
.checks label { display: flex; align-items: center; gap: 6px; padding-left: 2px; }
.checks input[type="checkbox"] { width: 8px; height: 8px; border-radius: 2px; }
.stack { display: grid; grid-auto-rows: 12px; gap: 1px; border-radius: 4px; overflow: hidden; padding-bottom: 1px; }
.stack label, .wide input { display: flex; background: #575757; padding: 0 9px; height: 12px; line-height: 12px; min-width: 0; }
.stack label input { flex: 1; width: 0; height: 12px; line-height: 12px; text-align: right; }
.wide input { width: 100%; text-align: center; padding: 0; }
.muted { color: #8c8c8c; }
.muted .stack label { background: #4c4c4c; }
.mapping .last { padding: 3px 7px 0; }

.trophy { left: 191px; top: 61px; width: 161px; height: 169px; padding: 0 7px; }
.trophy h3 { margin: 0 -7px 3px; background: #a26035; padding-left: 6px; }
.trophy p { margin: 0 -7px; }
.trophy .out .sock { top: 4px; }
.image { display: flex; height: 11px; gap: 1px; margin: 6px 0 5px; border-radius: 4px; overflow: hidden; }
.image button { width: 13px; background: #575757; color: #aaa; }
.image .lite { color: #fff; }
.image .im-pick { width: 21px; background: #2a2a2a; color: #ddd; gap: 2px; }
.image input { flex: 1; background: #222; padding-left: 4px; }
.trophy .nsel { width: 100%; margin-bottom: 5px; }
.cspace { display: flex; justify-content: space-between; align-items: center; padding-left: 4px; height: 12px; margin: -1px 0 4px; }
.trophy .cspace .nsel { width: 70px; margin: 0; }
.trophy .in { padding-left: 11px; }

.sss { left: 328px; top: 270px; width: 102px; height: 131px; border: 1px solid #f4f4f4; padding: 0 7px; }
.sss h3 { margin: 0 -7px 2px; background: #2e8f62; padding-left: 6px; }
.sss p, .sss .nrow { margin: 0 -7px; }
.sss > .nsel { width: 84px; margin: 5px 0 3px; height: 13px; }
.sss .nrow { display: flex; padding: 0 8px 0 7px; align-items: center; }
.nrow span { padding-left: 4px; flex: 1; }
.swatch { width: 39px; height: 12px; border-radius: 4px; background: #e7e7e7; }
.nrow .nsel { flex: 1; }
.nf label { display: flex; flex: 1; height: 12px; line-height: 12px; background: #575757; padding: 0 10px 0 9px; border-radius: 3px; white-space: nowrap; }
.nf input { flex: 1; width: 0; text-align: right; }
.tex label { border-left: 1px solid #5680c2; padding: 0 7px 0 5px; }

.viewer { left: 524px; top: 239px; width: 94px; height: 21px; border-radius: 9px; background: #2d8f60; border: 1px solid #8a9a68; display: flex; align-items: center; padding: 0 4px 0 6px; }
.viewer i { width: 8px; font-size: 5px; }
.viewer span { flex: 1; }
.viewer .col { left: -3px; top: 3px; }
.viewer .val { left: -3px; top: 13px; }
.viewer .shd { right: -3px; top: 8px; }

.output { left: 523px; top: 271px; width: 95px; height: 80px; }
.output h3 { background: #85303c; padding-left: 6px; }
.output .nsel { width: 78px; margin: 4px 8px 3px; }
.output .in { padding-left: 12px; }
.mat-name { position: absolute; left: 33px; bottom: 30px; font-size: 11px; color: #fff; }
.canvas .flap { top: 17px; background: none; color: #999; }

/* status bar */
.status { display: flex; align-items: center; background: #2f2f2f; border-top: 2px solid #1f1f1f; padding: 1px 35px 0 12px; color: #adadad; text-shadow: 0 1px 2px #111; }
.keys { display: flex; gap: 14px; width: 374px; white-space: nowrap; }
.keys span { display: flex; align-items: center; gap: 12px; }
.keys span + span { gap: 9px; }
.stats { margin-left: auto; white-space: nowrap; }
```
FILE: grid.js
```js
// Ground-plane projection: (u, v) on the floor to a point on screen.
const project = (u, v) => {
  const w = 1 - 0.012337 * u + 0.05887 * v;
  return [(617.5 + 50.853 * u + 51.835 * v) / w, (553.3 + 3.969 * u + 3.444 * v) / w];
};
const seg = (a, b) => 'M' + a.map(n => n.toFixed(1)) + 'L' + b.map(n => n.toFixed(1));
const NEAR = 0.2;

// Line of constant u, from the near plane (or a given v) into the distance.
const alongV = (u, from, to) => {
  const near = (NEAR - 1 + 0.012337 * u) / 0.05887;
  return seg(project(u, from === undefined ? near : Math.max(from, near)), project(u, to === undefined ? near + 4000 : to));
};
// Line of constant v.
const alongU = v => {
  const far = (1 + 0.05887 * v - NEAR) / 0.012337;
  return seg(project(far - 4000, v), project(far, v));
};

let minor = '', major = '';
for (let n = -70; n <= 60; n++) if (n % 10) minor += alongV(n);
for (let n = -12; n <= 50; n++) if (n % 10) minor += alongU(n);
for (let n = -400; n <= 400; n += 10) if (n) major += alongV(n);
for (let n = -10; n <= 300; n += 10) if (n) major += alongU(n);
document.getElementById('grid-minor').setAttribute('d', minor);
document.getElementById('grid-major').setAttribute('d', major);

// The part of the grid that lies in front of the cube.
const FRONT = -3.28;
let front = '';
for (let n = -4; n <= 6; n++) if (n) front += alongV(n, undefined, FRONT);
for (let n = -8; n <= -4; n++) front += alongU(n);
document.getElementById('grid-front').setAttribute('d', front);
document.getElementById('front-path').setAttribute('d', 'M303.7 403.3L351.4 794 765.3 897.6 849.8 493z');
```
